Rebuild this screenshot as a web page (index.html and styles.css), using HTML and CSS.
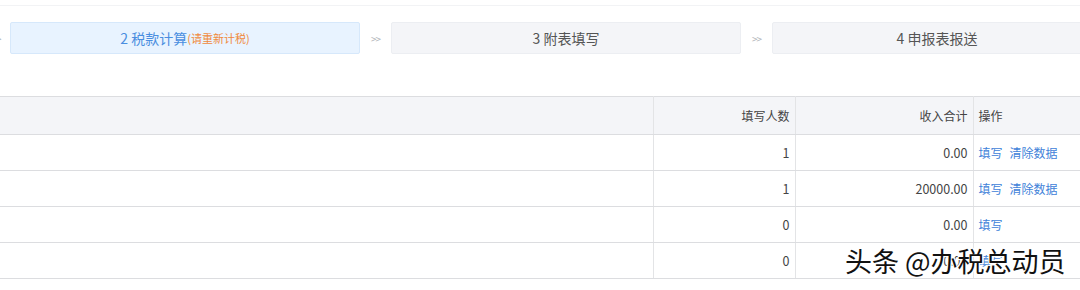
FILE: index.html
```html
<!DOCTYPE html>
<html lang="zh-CN">
<head>
<meta charset="utf-8">
<link rel="stylesheet" href="styles.css">
</head>
<body>
<div class="page">
  <div class="topline"></div>
  <div class="steps">
    <span class="sep sep-first">&gt;</span>
    <div class="step active">2 税款计算<span class="hint">(请重新计税)</span></div>
    <span class="sep">&gt;&gt;</span>
    <div class="step">3 附表填写</div>
    <span class="sep">&gt;&gt;</span>
    <div class="step last">4 申报表报送</div>
  </div>
  <table class="grid">
    <colgroup>
      <col class="c1"><col class="c2"><col class="c3"><col class="c4">
    </colgroup>
    <thead>
      <tr><th></th><th class="r">填写人数</th><th class="r">收入合计</th><th class="l">操作</th></tr>
    </thead>
    <tbody>
      <tr><td></td><td class="r">1</td><td class="r">0.00</td><td class="l"><a>填写</a><a>清除数据</a></td></tr>
      <tr><td></td><td class="r">1</td><td class="r">20000.00</td><td class="l"><a>填写</a><a>清除数据</a></td></tr>
      <tr><td></td><td class="r">0</td><td class="r">0.00</td><td class="l"><a>填写</a></td></tr>
      <tr><td></td><td class="r">0</td><td class="r">0.00</td><td class="l"><a>填写</a></td></tr>
    </tbody>
  </table>
  <div class="watermark">头条 @办税总动员</div>
</div>
</body>
</html>
```
FILE: styles.css
```css
html, body {
  margin: 0;
  padding: 0;
  background: #fff;
}
body {
  font-family: "Noto Sans CJK SC", "Noto Sans", sans-serif;
  color: #555;
  font-size: 13px;
  width: 1080px;
  height: 290px;
  overflow: hidden;
}
.page {
  position: relative;
  width: 1080px;
  height: 290px;
  overflow: hidden;
}
.topline {
  height: 5px;
  border-bottom: 1px solid #f2f3f5;
}
.steps {
  display: flex;
  align-items: center;
  margin-top: 16px;
  height: 32px;
}
.step {
  box-sizing: border-box;
  height: 32px;
  width: 350px;
  flex: none;
  display: flex;
  align-items: center;
  justify-content: center;
  background: #f4f5f8;
  border: 1px solid #eceef2;
  border-radius: 2px;
  color: #555;
  font-size: 14px;
}
.step.active {
  background: #e8f3ff;
  border-color: #d6e8fb;
  color: #4a8ee0;
}
.step.last {
  width: 330px;
}
.hint {
  color: #f08a3c;
  font-size: 11px;
}
.sep {
  flex: none;
  width: 31px;
  text-align: center;
  color: #b0b3b8;
  font-size: 10px;
  letter-spacing: -1px;
}
.sep-first {
  width: 10px;
  text-align: left;
  margin-left: -4px;
  margin-right: 4px;
}
.grid {
  margin-top: 42px;
  border-collapse: collapse;
  table-layout: fixed;
  width: 1100px;
}
.c1 { width: 653px; }
.c2 { width: 142px; }
.c3 { width: 178px; }
.c4 { width: 127px; }
.grid th, .grid td {
  padding: 0 5px;
  border-right: 1px solid #e3e4e6;
  border-bottom: 1px solid #dcdde0;
  white-space: nowrap;
}
.grid thead th {
  height: 37px;
  background: #f4f5f8;
  border-top: 1px solid #dcdde0;
  font-weight: normal;
  font-size: 12px;
  color: #444;
}
.grid td {
  height: 35px;
  font-size: 12.5px;
  color: #444;
}
.grid .r { text-align: right; }
.grid .l { text-align: left; }
.grid a {
  color: #3f82d9;
  font-size: 12px;
  margin-right: 7px;
  cursor: pointer;
}
.watermark {
  position: absolute;
  left: 845px;
  top: 242px;
  font-size: 27px;
  line-height: 38px;
  color: #111;
  font-family: "Noto Sans CJK SC", sans-serif;
  text-shadow: 1px 1px 0 #fff, -1px -1px 0 #fff, 1px -1px 0 #fff, -1px 1px 0 #fff, 0 0 3px #fff;
}
```
